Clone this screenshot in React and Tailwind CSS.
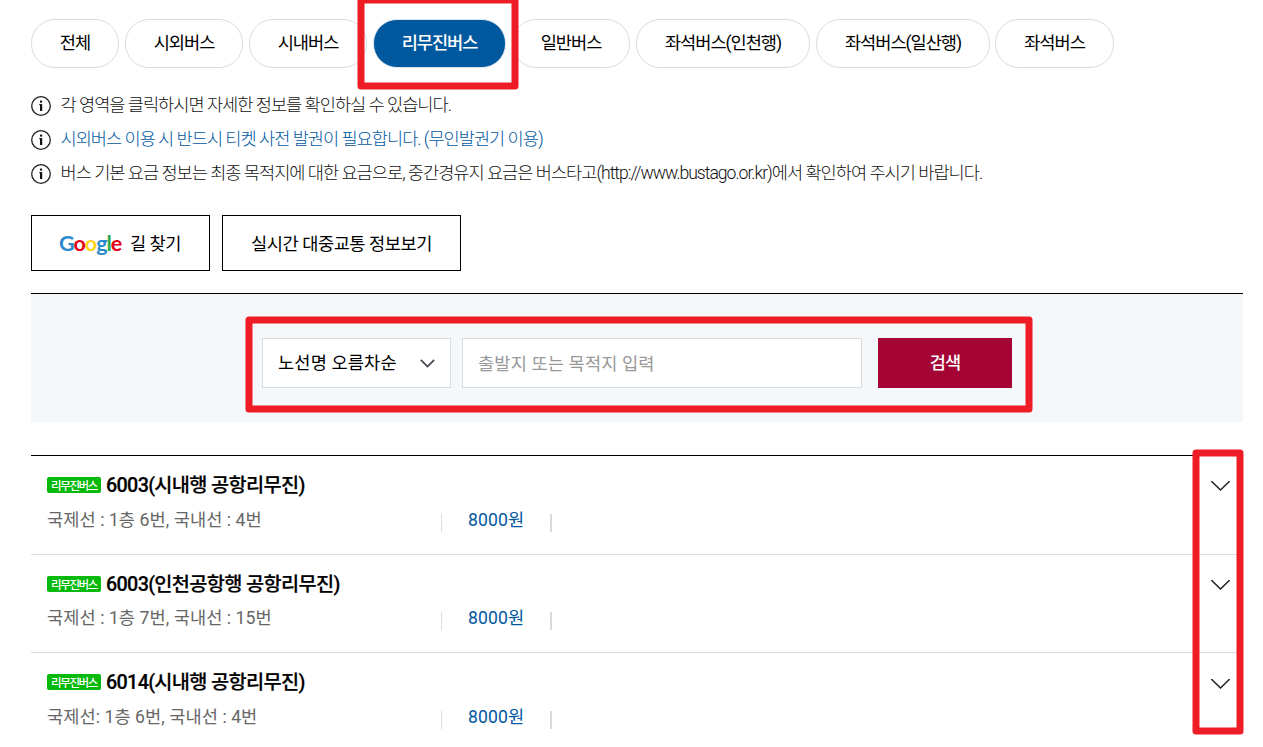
const tabs = [
  { label: '전체', width: 'w-[88px]', gap: '' },
  { label: '시외버스', width: 'w-[118px]', gap: 'ml-[6px]' },
  { label: '시내버스', width: 'w-[118px]', gap: 'ml-[6px]' },
  { label: '리무진버스', width: 'w-[133px]', gap: 'ml-[6px]', active: true },
  { label: '일반버스', width: 'w-[118px]', gap: 'ml-[6px]' },
  { label: '좌석버스(인천행)', width: 'w-[174px]', gap: 'ml-[6px]' },
  { label: '좌석버스(일산행)', width: 'w-[174px]', gap: 'ml-[6px]' },
  { label: '좌석버스', width: 'w-[119px]', gap: 'ml-[5px]' },
];

const notices = [
  { text: '각 영역을 클릭하시면 자세한 정보를 확인하실 수 있습니다.', color: 'text-[#111]' },
  { text: '시외버스 이용 시 반드시 티켓 사전 발권이 필요합니다. (무인발권기 이용)', color: 'text-[#00589f]' },
  {
    text: '버스 기본 요금 정보는 최종 목적지에 대한 요금으로, 중간경유지 요금은 버스타고(http://www.bustago.or.kr)에서 확인하여 주시기 바랍니다.',
    color: 'text-[#111]',
  },
];

const routes = [
  { name: '6003(시내행 공항리무진)', stop: '국제선 : 1층 6번, 국내선 : 4번', fare: '8000원', height: 'h-[99px]', sub: 'mt-[8px]', arrow: 'mt-[25px]' },
  { name: '6003(인천공항행 공항리무진)', stop: '국제선 : 1층 7번, 국내선 : 15번', fare: '8000원', height: 'h-[98px]', sub: 'mt-[7px]', arrow: 'mt-[25px]' },
  { name: '6014(시내행 공항리무진)', stop: '국제선: 1층 6번, 국내선 : 4번', fare: '8000원', height: 'h-[94px]', sub: 'mt-[8px]', arrow: 'mt-[26px]', last: true },
];

function InfoIcon() {
  return (
    <svg className="mt-[2px] h-5 w-5 shrink-0" viewBox="0 0 20 20" fill="none">
      <circle cx="10" cy="10" r="9.3" stroke="#222" strokeWidth="1.3" />
      <rect x="9" y="4.6" width="2.1" height="2" fill="#111" />
      <path d="M8.2 8.6h1.2" stroke="#111" strokeWidth="1" />
      <rect x="9" y="8.1" width="2.2" height="6.9" fill="#111" />
    </svg>
  );
}

function GoogleWord() {
  return (
    <span className="mb-px inline-block w-[71px] text-left font-[Lato,sans-serif] text-[21.5px] leading-[24px] font-bold tracking-[-1px]">
      <span className="text-[#2a8acb]">G</span>
      <span className="text-[#e2001a]">o</span>
      <span className="text-[#ffd31a]">o</span>
      <span className="text-[#2a8acb]">g</span>
      <span className="text-[#2fa84f]">l</span>
      <span className="text-[#e2001a]">e</span>
    </span>
  );
}

function RouteRow({ route }) {
  return (
    <li className={`flex justify-between ${route.height} ${route.last ? '' : 'border-b border-[#dadde0]'}`}>
      <div className="pt-4 pl-4">
        <div className="flex h-7 items-center">
          <span className="mb-[2px] flex h-4 w-[54px] items-center justify-center rounded-[2px] bg-[#06b90b] text-[11.5px] leading-4 font-medium tracking-[-1.4px] whitespace-nowrap text-white">
            <span className="pt-px">리무진버스</span>
          </span>
          <strong className="ml-[5px] text-[19.8px] leading-7 font-medium tracking-[-0.7px] whitespace-nowrap text-black [-webkit-text-stroke:0.2px_#000]">
            {route.name}
          </strong>
        </div>
        <div className={`flex h-6 items-center ${route.sub}`}>
          <span className="w-[394px] text-[17.6px] leading-6 tracking-[0.06px] whitespace-nowrap text-[#666]">{route.stop}</span>
          <span className="mt-[6px] h-[18px] w-px bg-[#dadde0]" />
          <span className="w-[108px] pl-[26px] text-[17.6px] leading-6 tracking-[0.1px] whitespace-nowrap text-[#00589f]">{route.fare}</span>
          <span className="mt-[6px] h-[18px] w-[2px] bg-[#d6dbe0]" />
        </div>
      </div>
      <svg className={`mr-[13px] h-[10px] w-[20px] ${route.arrow}`} viewBox="0 0 20 10" fill="none">
        <path d="M1.2 0 10.5 9 19.8 0" stroke="#222" strokeWidth="1.5" />
      </svg>
    </li>
  );
}

export default function App() {
  return (
    <div className="relative h-[747px] w-[1263px] overflow-hidden bg-white pt-[19px] pr-5 pl-[31px] font-[Roboto,'Noto_Sans_CJK_KR',sans-serif]">
      <nav className="flex">
        {tabs.map((t) => (
          <button
            key={t.label}
            className={`flex h-[49px] items-center justify-center rounded-[24px] border text-[17.6px] tracking-[-1.05px] whitespace-nowrap ${t.width} ${t.gap} ${
              t.active ? 'border-[#dfe6ee] bg-[#00589f] font-medium text-white' : 'border-[#dcdcdc] text-black'
            }`}
          >
            {t.label}
          </button>
        ))}
      </nav>

      <ul className="mt-[26px]">
        {notices.map((n) => (
          <li key={n.text} className="flex h-[34px] items-start">
            <InfoIcon />
            <span className={`ml-[9.5px] text-[17.6px] leading-[22px] font-light tracking-[-1.01px] whitespace-nowrap ${n.color}`}>{n.text}</span>
          </li>
        ))}
      </ul>

      <div className="mt-[19px] flex gap-3">
        <button className="flex h-14 w-[179px] items-center border border-black pl-[27px] text-[17.6px] tracking-[-0.5px] whitespace-nowrap text-black">
          <GoogleWord />
          <span className="mt-[2px]">길 찾기</span>
        </button>
        <button className="flex h-14 w-[239px] items-center justify-center border border-black pt-[2px] text-[17.6px] tracking-[-0.45px] whitespace-nowrap text-black">
          실시간 대중교통 정보보기
        </button>
      </div>

      <div className="mt-[22px] flex h-[129px] w-[1212px] border-t border-black bg-[#f4f8fb] pt-[44px] pl-[231px]">
        <div className="flex h-[50px] w-[189px] items-center justify-between border border-[#d9d9d9] bg-white pr-[15px] pl-[15px]">
          <span className="text-[17.6px] tracking-[0.13px] whitespace-nowrap text-black">노선명 오름차순</span>
          <svg className="mt-px h-[9px] w-[15px]" viewBox="0 0 15 9" fill="none">
            <path d="M0.8 0.8 7.5 7.6 14.2 0.8" stroke="#444450" strokeWidth="1.7" />
          </svg>
        </div>
        <input
          className="ml-[11px] h-[50px] w-[400px] border border-[#d9d9d9] bg-white px-[15px] pt-px text-[17.6px] tracking-[0.13px] outline-none placeholder:text-[#999]"
          placeholder="출발지 또는 목적지 입력"
        />
        <button className="ml-4 h-[50px] w-[134px] bg-[#a50534] text-[17.6px] font-medium tracking-[-1.05px] text-white">검색</button>
      </div>

      <ul className="mt-[33px] w-[1212px] border-t border-black">
        {routes.map((r) => (
          <RouteRow key={r.name + r.stop} route={r} />
        ))}
      </ul>

      <svg className="pointer-events-none absolute inset-0 h-[747px] w-[1263px]" viewBox="0 0 1263 747" fill="none" stroke="#ee1c25" strokeWidth="7" strokeLinejoin="round">
        <rect x="361" y="0" width="154" height="86" />
        <rect x="249" y="320" width="780" height="89" />
        <rect x="1196" y="453" width="44" height="278" />
      </svg>
    </div>
  );
}
